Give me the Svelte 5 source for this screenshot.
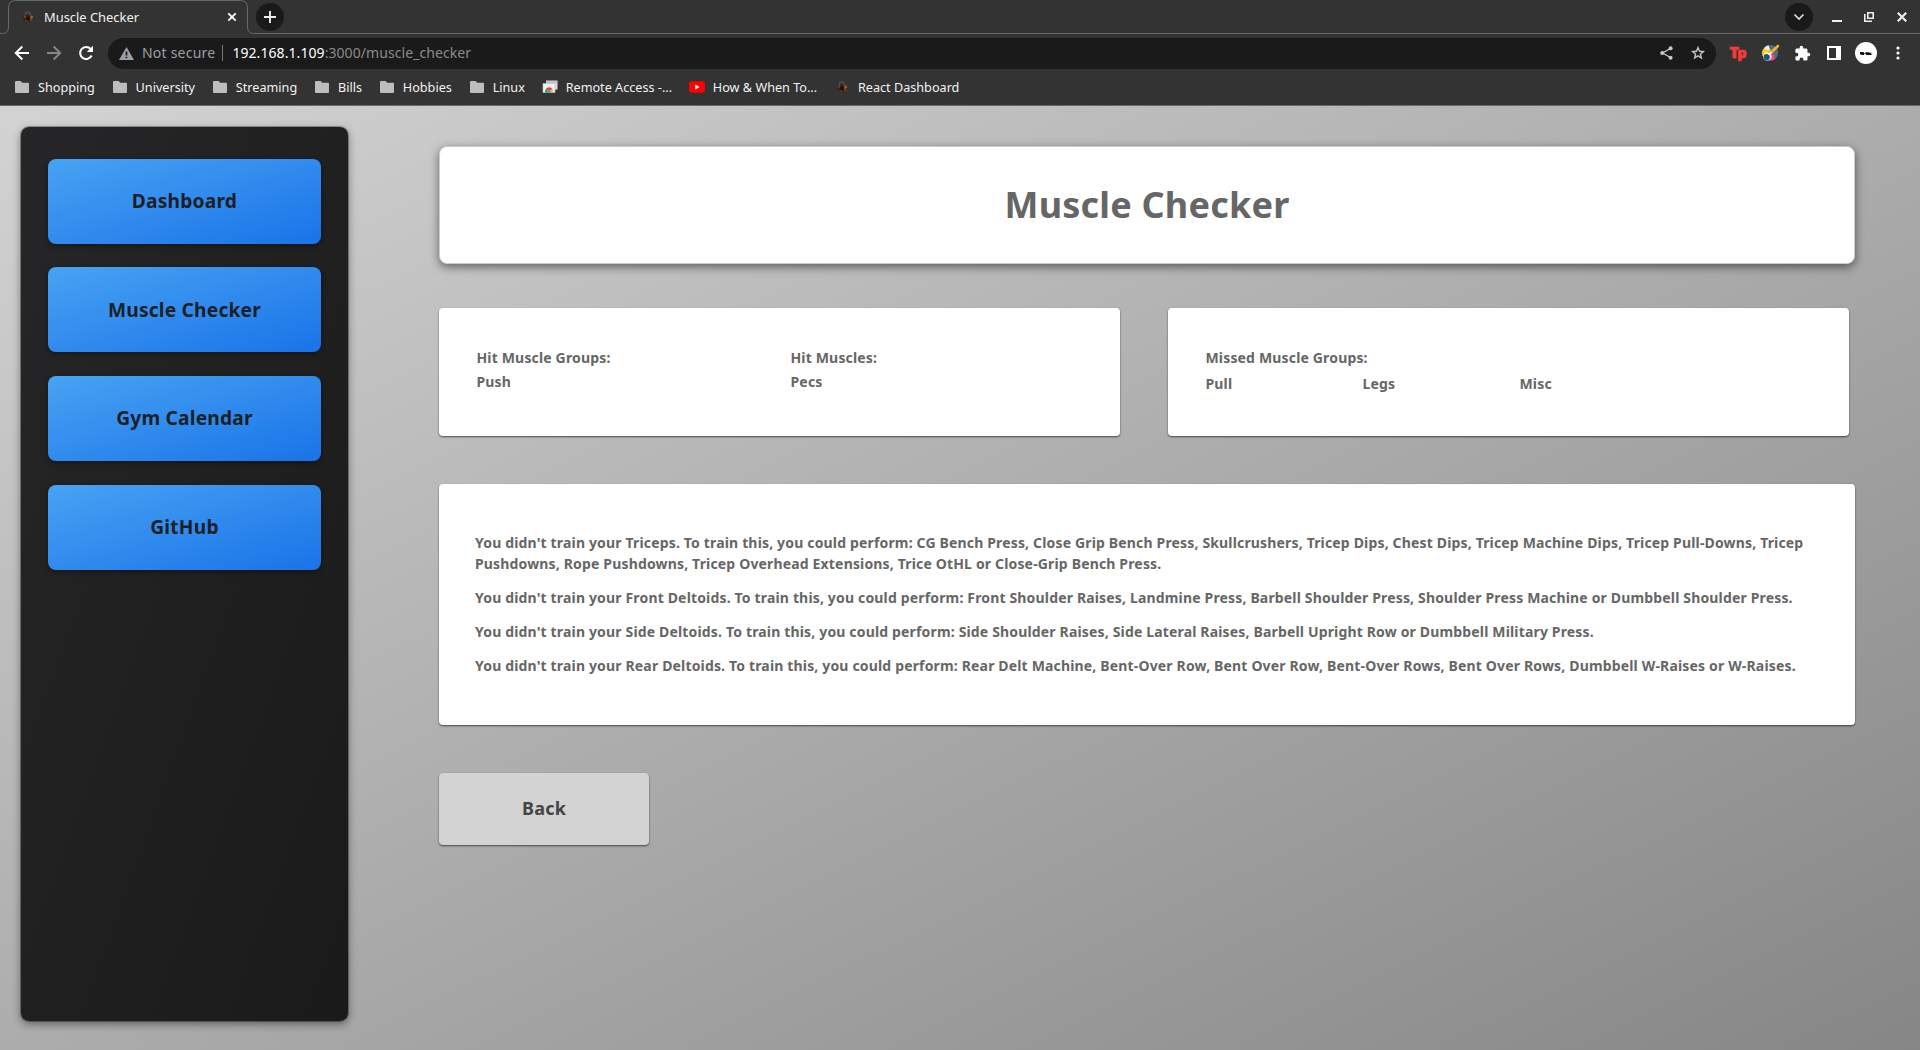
<script>
  const folders = ['Shopping', 'University', 'Streaming', 'Bills', 'Hobbies', 'Linux'];
  const links = ['Dashboard', 'Muscle Checker', 'Gym Calendar', 'GitHub'];
  const missed = ['Pull', 'Legs', 'Misc'];
  const advice = [
    "You didn't train your Triceps. To train this, you could perform: CG Bench Press, Close Grip Bench Press, Skullcrushers, Tricep Dips, Chest Dips, Tricep Machine Dips, Tricep Pull-Downs, Tricep Pushdowns, Rope Pushdowns, Tricep Overhead Extensions, Trice OtHL or Close-Grip Bench Press.",
    "You didn't train your Front Deltoids. To train this, you could perform: Front Shoulder Raises, Landmine Press, Barbell Shoulder Press, Shoulder Press Machine or Dumbbell Shoulder Press.",
    "You didn't train your Side Deltoids. To train this, you could perform: Side Shoulder Raises, Side Lateral Raises, Barbell Upright Row or Dumbbell Military Press.",
    "You didn't train your Rear Deltoids. To train this, you could perform: Rear Delt Machine, Bent-Over Row, Bent Over Row, Bent-Over Rows, Bent Over Rows, Dumbbell W-Raises or W-Raises."
  ];
</script>

{#snippet kettlebell()}
  <svg width="16" height="16" viewBox="0 0 16 16">
    <path d="M5.300 7V4.600Q5.800 3 7.800 3t2.500 2.500V7" fill="none" stroke="#5d5855" stroke-width="1.100" />
    <path d="M3.500 7.500l2-1.500h4l2 2-.5 4-2.500 1.500-3.500-.3L3 11z" fill="#352119" />
    <path d="M9.800 6l2.500.5.2 2-.8 3-1.700.5z" fill="#7d4215" />
    <circle cx="12" cy="8" r="1" fill="#c06a12" />
    <path d="M3.800 7.200l1.700-1 .8 1.800-2 1.500z" fill="#6b432c" />
    <path d="M6.500 7.500h3v3.500h-3z" fill="#151311" />
    <path d="M5 12l3 .4" stroke="#74421f" />
  </svg>
{/snippet}

<div class="window">
  <header class="chrome">
    <div class="tabstrip">
      <svg class="tabline" width="1920" height="34" viewBox="0 0 1920 34">
        <path d="M0 33.500H2Q8.500 33.500 8.500 27V7.500Q8.500.5 15.500.5H240.500Q247.500.5 247.500 7.500V27Q247.500 33.500 254 33.500H1920" fill="none" stroke="#686868" />
      </svg>
      <div class="tab">
        {@render kettlebell()}
        <span class="tabtitle">Muscle Checker</span>
        <svg width="10" height="10" viewBox="0 0 10 10"><path d="M1.300 1.300l7.400 7.400M8.700 1.300L1.300 8.700" stroke="#fff" stroke-width="1.900" /></svg>
      </div>
      <div class="round newtab"><svg width="14" height="14" viewBox="0 0 14 14"><path d="M7 1v12M1 7h12" stroke="#eee" stroke-width="1.900" /></svg></div>
      <div class="wincontrols">
        <div class="round"><svg width="12" height="8" viewBox="0 0 12 8"><path d="M1.500 1.500L6 6l4.500-4.500" fill="none" stroke="#ddd" stroke-width="1.700" /></svg></div>
        <svg class="min" width="10" height="10" viewBox="0 0 10 10"><path d="M0 9h10" stroke="#eee" stroke-width="2" /></svg>
        <svg class="max" width="10" height="10" viewBox="0 0 10 10"><path d="M3.800.8h5.400v5.400H3.800zM.8 2v7.200H8" fill="none" stroke="#eee" stroke-width="1.600" /></svg>
        <svg class="shut" width="10" height="10" viewBox="0 0 10 10"><path d="M.8.8l8.400 8.400M9.200.8L.8 9.200" stroke="#eee" stroke-width="2.200" /></svg>
      </div>
    </div>

    <div class="toolbar">
      <div class="nav">
        <svg width="16" height="16" viewBox="0 0 16 16"><path d="M15 8H2M8.300 1.500L1.800 8l6.500 6.500" fill="none" stroke="#fff" stroke-width="2" /></svg>
        <svg width="16" height="16" viewBox="0 0 16 16"><path d="M1 8h13M7.700 1.500L14.200 8l-6.500 6.500" fill="none" stroke="#868686" stroke-width="2" /></svg>
        <svg width="16" height="16" viewBox="0 0 16 16"><path d="M13.600 10.500A6 6 0 1 1 12.600 4" fill="none" stroke="#fff" stroke-width="2.100" /><path d="M15 .8V7H8.800z" fill="#fff" /></svg>
      </div>
      <div class="omnibox">
        <svg width="15" height="13" viewBox="0 0 15 13"><path d="M7.500 0L15 13H0z" fill="#9aa0a6" /><path d="M7.500 4.500v4M7.500 9.700v1.600" stroke="#1a1a1a" stroke-width="1.700" /></svg>
        <span class="insecure">Not secure</span>
        <i class="rule"></i>
        <span class="url"><b>192.168.1.109</b>:3000/muscle_checker</span>
        <div class="actions">
          <div class="cell"><svg width="13" height="14" viewBox="0 0 13 14"><path d="M10.500 2.500L2.500 7l8 4.500" fill="none" stroke="#c8c8c8" stroke-width="1.400" /><g fill="#c8c8c8"><circle cx="10.600" cy="2.200" r="2" /><circle cx="2.200" cy="7" r="2" /><circle cx="10.600" cy="11.800" r="2" /></g></svg></div>
          <div class="cell"><svg width="16" height="16" viewBox="0 0 24 24"><path d="M22 9.240l-7.190-.62L12 2 9.190 8.630 2 9.240l5.460 4.730L5.820 21 12 17.270 18.180 21l-1.630-7.030L22 9.240zM12 15.400l-3.760 2.270 1-4.280-3.320-2.880 4.380-.38L12 6.100l1.710 4.040 4.380.38-3.320 2.880 1 4.280L12 15.400z" fill="#d0d0d0" stroke="#d0d0d0" stroke-width=".5" /></svg></div>
        </div>
      </div>
      <div class="extensions">
        <div class="cell"><span class="tp">T<small>p</small></span></div>
        <div class="cell">
          <svg width="18" height="18" viewBox="0 0 18 18">
            <circle cx="9.500" cy="8.800" r="7.700" fill="#46708a" />
            <path d="M1 8q.4-3.200 3-4.500l3-.3 3 3L6.500 9.500 1.300 12z" fill="#ffc928" />
            <path d="M3 4.300Q4.700 1.700 7.500 1.200L9 5.500 6 6z" fill="#f3efe0" />
            <path d="M8.500 9.800l4 .2 1.500 5q-2.500 2-5.500 1.500z" fill="#ff4388" />
            <circle cx="6.300" cy="12.500" r="4.300" fill="#e8f1f5" /><circle cx="5.700" cy="13.200" r="3.100" fill="#245675" />
            <path d="M9.800 8.800L17 2" stroke="#ffad24" stroke-width="2.700" stroke-linecap="round" /><path d="M7.500 10.700l2.800-2.600" stroke="#fff" stroke-width="1.700" />
          </svg>
        </div>
        <div class="cell"><svg width="17" height="17" viewBox="0 0 24 24"><path d="M20.500 11H19V7c0-1.100-.9-2-2-2h-4V3.500a2.500 2.500 0 0 0-5 0V5H4c-1.100 0-2 .9-2 2v3.800h1.500a2.700 2.700 0 0 1 0 5.400H2V20c0 1.100.9 2 2 2h3.800v-1.500a2.700 2.700 0 0 1 5.400 0V22H17c1.100 0 2-.9 2-2v-4h1.500a2.500 2.500 0 0 0 0-5z" fill="#fff" /></svg></div>
        <div class="cell"><svg width="14" height="14" viewBox="0 0 14 14"><path d="M0 0h14v14H0z" fill="#fff" /><path d="M2 2h7v10H2z" fill="#333" /></svg></div>
        <div class="cell"><div class="avatar"><svg width="13" height="5" viewBox="0 0 13 5"><path d="M0 1h2l2 .2V4H1.500L0 3z" fill="#111" /><path d="M4 2h2v1H4z" fill="#777" /><path d="M5.500 1.200h3l1 .6h2V4h-5l-1-1z" fill="#111" /><circle cx="12" cy="2.500" r=".8" fill="#d7c6b8" /></svg></div></div>
        <div class="cell"><svg width="4" height="14" viewBox="0 0 4 14"><g fill="#fff"><circle cx="2" cy="2" r="1.600" /><circle cx="2" cy="7" r="1.600" /><circle cx="2" cy="12" r="1.600" /></g></svg></div>
      </div>
    </div>

    <nav class="bookmarks">
      {#each folders as name}
        <div class="bookmark">
          <svg width="16" height="16" viewBox="0 0 16 16"><path d="M2 2h4.500l1.800 1.800H14q1 0 1 1V13q0 1-1 1H2q-1 0-1-1V3q0-1 1-1z" fill="#bdbdbd" /></svg>
          <span>{name}</span>
        </div>
      {/each}
      <div class="bookmark">
        <svg width="16" height="16" viewBox="0 0 16 16">
          <path d="M4 1.500h11.500v9H4z" fill="#ddd" /><path d="M4 3h11.500" stroke="#aaa" /><path d="M1 4.500h12v9H1z" fill="#f3f3f3" stroke="#bbb" stroke-width=".7" />
          <path d="M3 13.500a4.200 4.200 0 0 1 1-3.700l2.200 2.200v1.500z" fill="#2fa84f" /><path d="M3.700 10a4.200 4.200 0 0 1 6.800 0l-2 1.500H6z" fill="#ea4335" /><path d="M8.800 11.300l2-1.300q.8 1.500.5 3.500H9z" fill="#fbc02d" /><path d="M5.200 13.500a2 2 0 0 1 4 0z" fill="#4285f4" />
        </svg>
        <span>Remote Access -...</span>
      </div>
      <div class="bookmark">
        <svg width="16" height="16" viewBox="0 0 16 16"><rect y="2.200" width="16" height="11.600" rx="2.800" fill="#f00" /><path d="M6.300 5.600v4.800L10.600 8z" fill="#fff" /></svg>
        <span>How &amp; When To...</span>
      </div>
      <div class="bookmark">{@render kettlebell()}<span>React Dashboard</span></div>
    </nav>
  </header>

  <div class="page">
    <aside class="sidebar">
      {#each links as link}
        <button class="navbutton">{link}</button>
      {/each}
    </aside>
    <main class="content">
      <section class="hero"><h1>Muscle Checker</h1></section>
      <div class="summary">
        <section class="card halves">
          <div><p>Hit Muscle Groups:</p><p>Push</p></div>
          <div><p>Hit Muscles:</p><p>Pecs</p></div>
        </section>
        <section class="card">
          <p>Missed Muscle Groups:</p>
          <div class="missed">{#each missed as group}<p>{group}</p>{/each}</div>
        </section>
      </div>
      <section class="card advice">
        {#each advice as line}<p>{line}</p>{/each}
      </section>
      <button class="back">Back</button>
    </main>
  </div>
</div>

<style>
  :global(body) { margin: 0; overflow: hidden; }
  .window { width: 1920px; height: 1050px; display: flex; flex-direction: column; font-family: "Noto Sans", sans-serif; }
  .window * { box-sizing: border-box; }
  svg { display: block; flex: none; }
  p, h1 { margin: 0; }

  .chrome { height: 106px; flex: none; background: #333; border-bottom: 1px solid #6b6868; color: #f2f2f2; font-size: 13px; white-space: nowrap; }
  .tabstrip { position: relative; height: 34px; display: flex; align-items: center; }
  .tabline { position: absolute; left: 0; top: 0; }
  .tab { width: 248px; height: 34px; padding: 0 11px 0 20px; display: flex; align-items: center; }
  .tabtitle { flex: 1; margin-left: 8px; font-size: 12.900px; }
  .round { width: 28px; height: 28px; border-radius: 50%; background: #1a1a1a; display: flex; align-items: center; justify-content: center; }
  .newtab { margin-left: 8px; }
  .wincontrols { margin-left: auto; margin-right: 13px; display: flex; align-items: center; }
  .min { margin-left: 19px; margin-top: -1px; }
  .max { margin-left: 22px; }
  .shut { margin-left: 23px; }

  .toolbar { height: 38px; display: flex; align-items: center; padding: 0 6px 0 14px; }
  .nav { display: flex; gap: 16px; width: 94px; }
  .omnibox { width: 1608px; height: 31px; border-radius: 16px; background: #1a1a1a; display: flex; align-items: center; padding: 0 2px 0 11px; font-size: 14px; line-height: 18px; }
  .insecure { margin: -1px 0 0 8px; color: #9aa0a6; letter-spacing: .22px; }
  .rule { width: 1px; height: 16px; margin: 0 9px 0 7px; background: #777; }
  .url { color: #8b8b8b; margin-top: -1px; letter-spacing: .07px; }
  .url b { color: #fff; font-weight: 400; }
  .actions { display: flex; margin-left: auto; }
  .cell { width: 32px; display: flex; align-items: center; justify-content: center; }
  .extensions { flex: 1; display: flex; align-items: center; padding-left: 6px; }
  .tp { width: 16px; color: #f33c3c; -webkit-text-stroke: .6px #f33c3c; font: 900 16px/18px "Noto Sans", sans-serif; letter-spacing: -1.800px; margin: -2px 0 0 -1px; }
  .tp small { font-size: 14.500px; }
  .avatar { width: 22px; height: 22px; border-radius: 50%; background: #fff; display: flex; align-items: center; justify-content: center; }

  .bookmarks { display: flex; gap: 16.800px; padding: 6px 0 0 14px; font-size: 12.650px; }
  .bookmark { display: flex; align-items: center; gap: 8px; height: 18px; }

  .page { flex: 1; display: flex; align-items: flex-start; padding: 20.600px 21px; background: linear-gradient(to bottom right, #d3d3d3, #868686); letter-spacing: .2px; }
  button { letter-spacing: inherit; }
  .sidebar { width: 327px; height: 894.400px; padding: 32.200px 27px; border-radius: 8px; display: flex; flex-direction: column; gap: 23.600px; background: linear-gradient(to bottom right, #262628, #1a1a1a); box-shadow: 0 0 0 1px rgba(0, 0, 0, .28), 0 3px 8px rgba(0, 0, 0, .45); }
  .navbutton { height: 85px; border: 0; border-radius: 8px; background: linear-gradient(to bottom right, #47a3f3, #1a73e8); color: #1c1f24; font: 700 19.200px "Noto Sans", sans-serif; padding: 0 0 1px; box-shadow: 0 2px 5px rgba(0, 0, 0, .4); }

  .content { width: 1416px; margin: 19.400px 0 0 91px; }
  .hero { height: 118px; border: 1px solid #ccc; border-radius: 8px; background: #fff; display: flex; align-items: center; justify-content: center; box-shadow: 0 3px 10px rgba(0, 0, 0, .5); }
  h1 { color: #666; font-size: 36px; font-weight: 700; line-height: 1.200; }
  .summary { display: flex; gap: 48px; margin-top: 44px; }
  .card { background: #fff; border-radius: 4px; color: #666; font-size: 14px; font-weight: 700; line-height: 24px; letter-spacing: .162px; box-shadow: 0 1px 2px rgba(0, 0, 0, .6); }
  .summary .card { width: 681px; height: 128px; padding: 38px 37.500px; }
  .halves { display: grid; grid-template-columns: 314px 1fr; }
  .missed { display: grid; grid-template-columns: repeat(3, 157px); margin-top: 2px; }
  .advice { height: 241px; margin-top: 48px; padding: 48px 36px 0; line-height: 21px; }
  .advice p { margin-bottom: 13px; }
  .back { display: block; width: 210px; height: 72px; margin-top: 48px; border: 0; border-radius: 4px; background: #d3d3d3; color: #444; font: 700 18px "Noto Sans", sans-serif; padding: 0 0 2px; box-shadow: 0 1px 2px rgba(0, 0, 0, .6); }
</style>
